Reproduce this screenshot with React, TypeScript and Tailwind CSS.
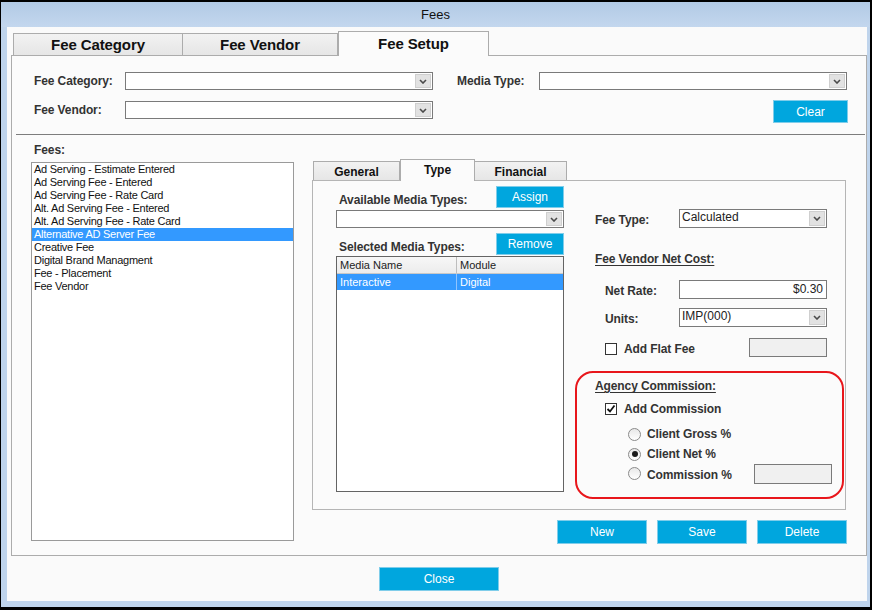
import clsx from "clsx"

const fees = [
  "Ad Serving - Estimate Entered",
  "Ad Serving Fee - Entered",
  "Ad Serving Fee - Rate Card",
  "Alt. Ad Serving Fee - Entered",
  "Alt. Ad Serving Fee - Rate Card",
  "Alternative AD Server Fee",
  "Creative Fee",
  "Digital Brand Managment",
  "Fee - Placement",
  "Fee Vendor",
]

function Chevron() {
  return (
    <svg width="8" height="5" viewBox="0 0 8 5" fill="none">
      <path d="M1 1 L4 4 L7 1" stroke="#4a4a4a" strokeWidth="1.6" />
    </svg>
  )
}

function Select({ value, className }: { value?: string; className?: string }) {
  return (
    <div className={clsx("flex items-stretch border border-[#7a7a7a] bg-white", className)}>
      <div className="flex-1 truncate pl-[2px] text-[12px] leading-[15px] text-[#222]">{value}</div>
      <div className="m-px flex w-[16px] items-center justify-center border border-[#cfcfcf] bg-[#e2e2e2]">
        <Chevron />
      </div>
    </div>
  )
}

function Btn({ label, className }: { label: string; className?: string }) {
  return (
    <button className={clsx("flex items-center justify-center border border-[#7fcdea] bg-[#00a6de] text-[12px] text-white", className)}>
      {label}
    </button>
  )
}

function Label({ children, className }: { children: React.ReactNode; className?: string }) {
  return <span className={clsx("text-[12px] font-bold leading-[14px] tracking-[-0.1px] text-[#333]", className)}>{children}</span>
}

function Checkbox({ checked }: { checked?: boolean }) {
  return (
    <div className="flex h-[12px] w-[12px] items-center justify-center border border-[#333] bg-white">
      {checked && (
        <svg width="10" height="10" viewBox="0 0 10 10" fill="none">
          <path d="M1.5 5 L4 7.5 L8.5 1.5" stroke="#111" strokeWidth="1.8" />
        </svg>
      )}
    </div>
  )
}

function Radio({ checked }: { checked?: boolean }) {
  return (
    <div className="flex h-[13px] w-[13px] items-center justify-center rounded-full border border-[#8a8a8a] bg-gradient-to-b from-[#e8e8e8] to-white">
      {checked && <div className="h-[6px] w-[6px] rounded-full bg-[#1a1a1a]" />}
    </div>
  )
}

export default function App() {
  return (
    <div className="h-[610px] w-[872px] bg-black pb-[3px] pl-[1px] pr-[2px] pt-[2px] font-['Liberation_Sans',Arial,sans-serif]">
      <div className="flex h-full flex-col bg-[#bfd4ec]">
        {/* title bar */}
        <div className="flex h-[25px] shrink-0 items-center justify-center bg-gradient-to-b from-[#b2cae5] to-[#c3d7ee] text-[13px] text-[#111]">
          Fees
        </div>

        <div className="mb-[6px] ml-[6px] mr-[3px] flex flex-1 flex-col bg-[#fafafa] pl-[4px] pt-[4px]">
          {/* main tabs */}
          <div className="flex h-[24px] items-end pl-[2px]">
            <div className="flex h-[22px] w-[170px] items-center justify-center border border-b-0 border-[#acacac] bg-gradient-to-b from-[#f2f2f2] to-[#e6e6e6] pt-[2px] text-[15px] font-bold tracking-[-0.1px] text-[#111]">
              Fee Category
            </div>
            <div className="flex h-[22px] w-[155px] items-center justify-center border border-b-0 border-l-0 border-[#acacac] bg-gradient-to-b from-[#f2f2f2] to-[#e6e6e6] pt-[2px] text-[15px] font-bold tracking-[-0.1px] text-[#111]">
              Fee Vendor
            </div>
            <div className="relative z-10 -mb-px flex h-[25px] w-[151px] items-start justify-center border border-b-0 border-[#acacac] bg-[#fbfbfb] pt-px text-[15px] font-bold tracking-[-0.1px] text-[#111]">
              Fee Setup
            </div>
          </div>

          {/* main panel */}
          <div className="flex h-[501px] flex-col border border-[#acacac] bg-[#fbfbfb] pt-[16px]">
            <div className="flex h-[18px] items-center pl-[22px]">
              <Label className="w-[91px]">Fee Category:</Label>
              <Select className="h-[18px] w-[308px]" />
              <Label className="ml-[24px] w-[82px]">Media Type:</Label>
              <Select className="h-[18px] w-[308px]" />
            </div>
            <div className="mt-[10px] flex items-start pl-[22px] pr-[18px]">
              <Label className="mt-[3px] w-[91px]">Fee Vendor:</Label>
              <Select className="mt-px h-[18px] w-[308px]" />
              <Btn label="Clear" className="ml-auto h-[23px] w-[75px]" />
            </div>
            <div className="ml-[4px] mr-px mt-[11px] h-px bg-[#7d7d7d]" />

            <div className="flex">
              {/* fees list */}
              <div className="ml-[19px] flex w-[263px] flex-col pt-[8px]">
                <Label className="pl-[3px]">Fees:</Label>
                <div className="mt-[5px] h-[379px] border border-[#9a9a9a] bg-white">
                  {fees.map((f) => (
                    <div
                      key={f}
                      className={clsx(
                        "h-[13px] pl-[2px] text-[11px] leading-[13px] tracking-[-0.25px]",
                        f === "Alternative AD Server Fee" ? "bg-[#3399ff] text-white" : "text-[#111]"
                      )}
                    >
                      {f}
                    </div>
                  ))}
                </div>
              </div>

              {/* detail tabs */}
              <div className="ml-[18px] flex w-[535px] flex-col pt-[24px]">
                <div className="flex h-[21px] items-end pl-px">
                  <div className="flex h-[19px] w-[87px] items-center justify-center border border-b-0 border-[#acacac] bg-gradient-to-b from-[#f2f2f2] to-[#e6e6e6] pt-[2px] text-[12px] font-bold text-[#111]">
                    General
                  </div>
                  <div className="relative z-10 -mb-px flex h-[22px] w-[75px] items-start justify-center border border-b-0 border-[#acacac] bg-[#fbfbfb] pt-px text-[12px] font-bold text-[#111]">
                    Type
                  </div>
                  <div className="flex h-[19px] w-[92px] items-center justify-center border border-b-0 border-l-0 border-[#acacac] bg-gradient-to-b from-[#f2f2f2] to-[#e6e6e6] pt-[2px] text-[12px] font-bold text-[#111]">
                    Financial
                  </div>
                </div>

                <div className="flex h-[330px] w-[534px] border border-[#b5b5b5] bg-[#fbfbfb]">
                  {/* media types */}
                  <div className="ml-[23px] flex w-[228px] flex-col pt-[5px]">
                    <div className="flex h-[22px] items-end justify-between">
                      <Label className="mb-[1px] pl-[3px]">Available Media Types:</Label>
                      <Btn label="Assign" className="h-[22px] w-[68px]" />
                    </div>
                    <Select className="mt-[2px] h-[18px]" />
                    <div className="mt-[5px] flex h-[22px] items-end justify-between">
                      <Label className="mb-[1px] pl-[3px]">Selected Media Types:</Label>
                      <Btn label="Remove" className="h-[22px] w-[68px]" />
                    </div>
                    <div className="mt-px h-[236px] border border-[#646464] bg-white">
                      <div className="flex h-[17px] border-b border-[#c8c8c8] bg-gradient-to-b from-[#f7f7f7] to-[#ececec] text-[11px] leading-[16px] text-[#222]">
                        <div className="w-[120px] border-r border-[#bdbdbd] pl-[3px]">Media Name</div>
                        <div className="flex-1 pl-[3px]">Module</div>
                      </div>
                      <div className="flex h-[16px] bg-[#3399ff] text-[11px] leading-[16px] text-white">
                        <div className="w-[120px] border-r border-[#8fc4ff] pl-[3px]">Interactive</div>
                        <div className="flex-1 pl-[3px]">Digital</div>
                      </div>
                    </div>
                  </div>

                  {/* fee type / commission */}
                  <div className="ml-[11px] flex w-[269px] flex-col pt-[28px]">
                    <div className="flex h-[19px] items-center pl-[20px]">
                      <Label className="mt-[3px] w-[84px]">Fee Type:</Label>
                      <Select value="Calculated" className="h-[19px] w-[148px]" />
                    </div>
                    <Label className="ml-[20px] mt-[24px] underline underline-offset-[2px]">Fee Vendor Net Cost:</Label>
                    <div className="mt-[14px] flex h-[19px] items-center pl-[30px]">
                      <Label className="mt-[2px] w-[74px]">Net Rate:</Label>
                      <div className="h-[19px] w-[148px] border border-[#7a7a7a] bg-white pr-[3px] text-right text-[12px] leading-[17px] text-[#222]">
                        $0.30
                      </div>
                    </div>
                    <div className="mt-[9px] flex h-[19px] items-center pl-[30px]">
                      <Label className="mt-[2px] w-[74px]">Units:</Label>
                      <Select value="IMP(000)" className="h-[19px] w-[148px]" />
                    </div>
                    <div className="mt-[11px] flex h-[19px] items-center pl-[30px]">
                      <div className="mt-[3px]">
                        <Checkbox />
                      </div>
                      <Label className="ml-[7px] mt-[3px]">Add Flat Fee</Label>
                      <div className="ml-auto mr-[17px] h-[19px] w-[78px] border border-[#7a7a7a] bg-[#f0f0f0]" />
                    </div>

                    <div className="mt-[14px] flex h-[128px] flex-col rounded-[18px] border-2 border-[#e8161b] pl-[18px] pt-[6px]">
                      <Label className="underline underline-offset-[2px]">Agency Commission:</Label>
                      <div className="mt-[9px] flex h-[14px] items-center pl-[10px]">
                        <Checkbox checked />
                        <Label className="ml-[7px]">Add Commission</Label>
                      </div>
                      <div className="mt-[11px] flex h-[14px] items-center pl-[33px]">
                        <Radio />
                        <Label className="ml-[6px]">Client Gross %</Label>
                      </div>
                      <div className="mt-[6px] flex h-[14px] items-center pl-[33px]">
                        <Radio checked />
                        <Label className="ml-[6px]">Client Net %</Label>
                      </div>
                      <div className="mt-[3px] flex h-[19px] items-center pl-[33px] pr-[10px]">
                        <Radio />
                        <Label className="ml-[6px] mt-[2px]">Commission %</Label>
                        <div className="ml-auto h-[20px] w-[78px] border border-[#7a7a7a] bg-[#f0f0f0]" />
                      </div>
                    </div>
                  </div>
                </div>

                <div className="mt-[10px] flex justify-end gap-[10px]">
                  <Btn label="New" className="h-[24px] w-[90px]" />
                  <Btn label="Save" className="h-[24px] w-[90px]" />
                  <Btn label="Delete" className="h-[24px] w-[90px]" />
                </div>
              </div>
            </div>
          </div>

          <div className="pt-[11px]">
            <Btn label="Close" className="ml-[368px] h-[24px] w-[120px]" />
          </div>
        </div>
      </div>
    </div>
  )
}
